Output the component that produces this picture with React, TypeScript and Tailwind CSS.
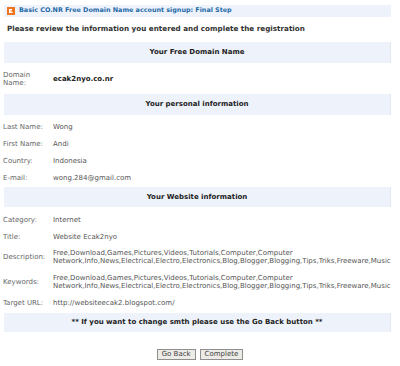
import React from "react";

const Bar = ({ children, className = "" }: { children: React.ReactNode; className?: string }) => (
  <div
    className={
      "ml-[4px] w-[387px] flex items-center justify-center bg-[#eef2fb] border-r border-[#e2e7f2] font-bold text-[#222] " +
      className
    }
  >
    {children}
  </div>
);

const Row = ({
  label,
  children,
  h = "h-[17px]",
}: {
  label: React.ReactNode;
  children: React.ReactNode;
  h?: string;
}) => (
  <div className={"flex items-center " + h}>
    <div className="w-[53px] pl-[3px] leading-[8px] text-[#666]">{label}</div>
    <div className="flex-1 leading-[8px] text-[#555] whitespace-nowrap">{children}</div>
  </div>
);

export default function App() {
  return (
    <div className="w-[400px] h-[366px] bg-white font-['DejaVu_Sans',Verdana,sans-serif] text-[7px] overflow-hidden">
      <div className="h-[5px]" />
      <div className="ml-[4px] w-[387px] h-[12px] flex items-center gap-[4px] bg-[#eef2fb] pl-[3px]">
        <svg width="8" height="8" viewBox="0 0 8 8">
          <rect width="8" height="8" fill="#f0731e" />
          <path d="M2 2h3v1.5H3.5v1h2V6H2z" fill="#fff" />
        </svg>
        <span className="font-bold text-[6.4px] text-[#1f6aa8]">
          Basic CO.NR Free Domain Name account signup: Final Step
        </span>
      </div>
      <div className="mt-[7px] h-[10px] flex items-center pl-[7px] font-bold text-[7.2px] text-[#333]">
        Please review the information you entered and complete the registration
      </div>

      <Bar className="mt-[8px] h-[21px]">Your Free Domain Name</Bar>
      <Row label={<>Domain<br />Name:</>} h="h-[31px]">
        <span className="font-bold text-[#222]">ecak2nyo.co.nr</span>
      </Row>

      <Bar className="h-[21px]">Your personal information</Bar>
      <div className="h-[3px]" />
      <Row label="Last Name:">Wong</Row>
      <Row label="First Name:">Andi</Row>
      <Row label="Country:">Indonesia</Row>
      <Row label="E-mail:">wong.284@gmail.com</Row>

      <Bar className="mt-[1px] h-[20px]">Your Website information</Bar>
      <div className="h-[4px]" />
      <Row label="Category:">Internet</Row>
      <Row label="Title:">Website Ecak2nyo</Row>
      <Row label="Description:" h="h-[24px]">
        <div>Free,Download,Games,Pictures,Videos,Tutorials,Computer,Computer</div>
        <div>Network,Info,News,Electrical,Electro,Electronics,Blog,Blogger,Blogging,Tips,Triks,Freeware,Music</div>
      </Row>
      <Row label="Keywords:" h="h-[25px]">
        <div>Free,Download,Games,Pictures,Videos,Tutorials,Computer,Computer</div>
        <div>Network,Info,News,Electrical,Electro,Electronics,Blog,Blogger,Blogging,Tips,Triks,Freeware,Music</div>
      </Row>
      <Row label="Target URL:">http://websiteecak2.blogspot.com/</Row>

      <Bar className="mt-[2px] h-[19px]">** If you want to change smth please use the Go Back button **</Bar>

      <div className="mt-[17px] flex justify-center gap-[4px]">
        <button className="h-[11px] px-[4px] flex items-center bg-[#ecebe6] border border-[#8f8f8f] text-[#444] leading-none">
          Go Back
        </button>
        <button className="h-[11px] px-[4px] flex items-center bg-[#ecebe6] border border-[#8f8f8f] text-[#444] leading-none">
          Complete
        </button>
      </div>
    </div>
  );
}
